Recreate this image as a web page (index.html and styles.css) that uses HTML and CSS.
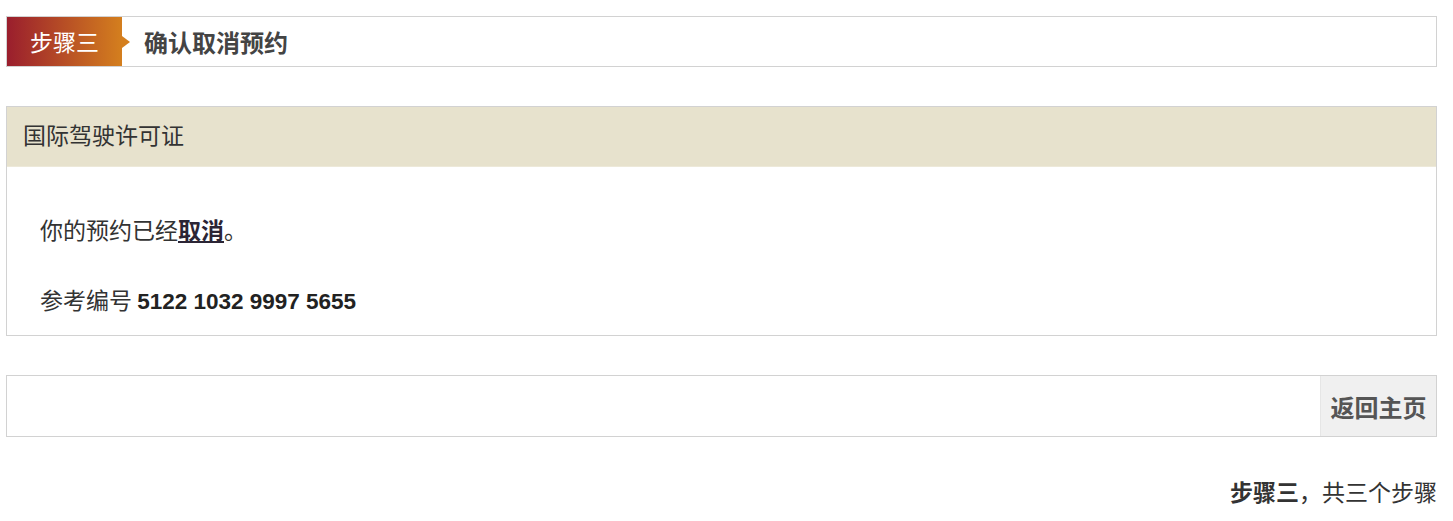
FILE: index.html
```html
<!DOCTYPE html>
<html lang="zh-CN">

<head>
  <meta charset="UTF-8" />
  <meta name="viewport" content="width=device-width, initial-scale=1.0" />
  <title>确认取消预约</title>
  <link rel="stylesheet" href="styles.css">
</head>

<body>

  <div class="step-bar">
    <div class="step-badge">步骤三</div>
    <h2 class="step-title">确认取消预约</h2>
  </div>

  <div class="panel">
    <div class="panel-head">国际驾驶许可证</div>
    <div class="panel-body">
      <p>你的预约已经<a href="#">取消</a>。</p>
      <p>参考编号 <strong class="ref">5122 1032 9997 5655</strong></p>
    </div>
  </div>

  <div class="actions">
    <button type="button" class="btn-home">返回主页</button>
  </div>

  <p class="step-count"><strong>步骤三</strong>，共三个步骤</p>

</body>

</html>
```

FILE: styles.css
```css
body {
  margin: 0;
  padding: 16px 16px 0 6px;
  font-family: "Noto Sans CJK SC", "Liberation Sans", sans-serif;
  font-size: 23px;
  color: #333;
}
.step-bar {
  display: flex;
  align-items: center;
  height: 49px;
  border: 1px solid #d2d2d2;
  background: #fff;
}
.step-badge {
  position: relative;
  width: 92px;
  height: 49px;
  line-height: 48px;
  padding-left: 23px;
  color: #fff;
  background: linear-gradient(to right, #9a1e2d, #d47f1e);
}
.step-badge::after {
  content: "";
  position: absolute;
  right: -8px;
  top: 19px;
  border-top: 6px solid transparent;
  border-bottom: 6px solid transparent;
  border-left: 8px solid #d47f1e;
}
.step-title {
  margin: 0 0 0 22px;
  font-size: 24px;
  line-height: 48px;
  font-weight: bold;
  color: #444;
}
.panel {
  margin-top: 39px;
  border: 1px solid #d2d2d2;
}
.panel-head {
  height: 59px;
  line-height: 55px;
  padding-left: 16px;
  background: #e7e2cd;
  border-bottom: 1px solid #ede9d9;
}
.panel-body {
  padding: 45px 33px 19px;
}
.panel-body p {
  margin: 0 0 36px;
  height: 34px;
  line-height: 34px;
}
.panel-body p:last-child {
  margin-bottom: 0;
}
.panel-body a {
  color: #2b2535;
  font-weight: bold;
}
.ref {
  font-family: "Liberation Sans", sans-serif;
  font-size: 22.5px;
  line-height: 1;
  color: #222;
}
.actions {
  display: flex;
  justify-content: flex-end;
  margin-top: 39px;
  height: 60px;
  border: 1px solid #d2d2d2;
}
.btn-home {
  width: 116px;
  border: none;
  border-left: 1px solid #e6e6e6;
  background: #f0f0f0;
  font-family: "Noto Sans CJK SC", sans-serif;
  font-size: 24px;
  font-weight: bold;
  color: #555;
}
.step-count {
  margin: 37px 0 0;
  line-height: 34px;
  text-align: right;
}
```
